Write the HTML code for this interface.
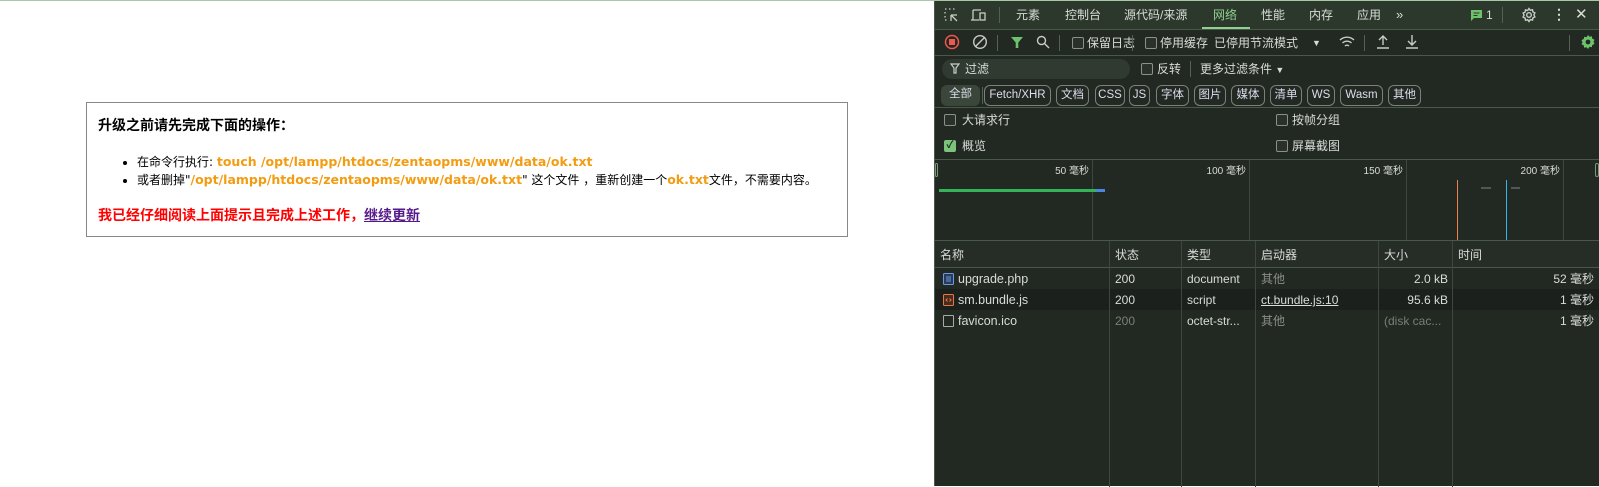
<!DOCTYPE html>
<html><head><meta charset="utf-8"><style>
*{box-sizing:border-box;margin:0;padding:0}
body{width:1599px;height:486px;overflow:hidden;background:#fff;font-family:"Liberation Sans","Noto Sans CJK SC",sans-serif;position:relative}
.a{position:absolute}
#topline{left:0;top:0;width:1599px;height:1px;background:#a8c8a8}
#box{left:86px;top:102px;width:762px;height:135px;border:1px solid #888;font-size:12px;color:#000;font-family:"DejaVu Sans","Noto Sans CJK SC",sans-serif}
#box .h{position:absolute;left:11px;top:12px;font-weight:bold;font-size:14px}
#box ul{position:absolute;left:50px;top:50px;line-height:18px}
#box li{list-style:disc}
.o{color:#f39c12;font-weight:bold;font-size:12.5px}
#box .r{position:absolute;left:11px;top:102px;color:#f00;font-weight:bold;font-size:14px}
#box .r a{color:#551a8b;text-decoration:underline}
#dt{left:934px;top:1px;width:665px;height:485px;background:#222822;color:#d8dcd8;font-size:12px;line-height:15px;border-left:1px solid #4a5a4a}
.t{position:absolute;white-space:nowrap;line-height:15px}
.hl{position:absolute;height:1px;background:#3c483c}
.vl{position:absolute;width:1px;background:#3c483c}
.cb{position:absolute;width:12px;height:12px;border:1px solid #8a908a;border-radius:2px;background:#2a302a}
.chip{position:absolute;top:84px;height:21px;border:1px solid #7a807a;border-radius:6px;font-size:11.5px;line-height:19px;text-align:center;color:#dde}
</style></head><body>
<div class="a" id="topline"></div>
<div class="a" id="box">
<div class="h">升级之前请先完成下面的操作：</div>
<ul>
<li>在命令行执行: <span class="o">touch /opt/lampp/htdocs/zentaopms/www/data/ok.txt</span></li>
<li>或者删掉"<span class="o">/opt/lampp/htdocs/zentaopms/www/data/ok.txt</span>" 这个文件 ，重新创建一个<span class="o">ok.txt</span>文件，不需要内容。</li>
</ul>
<div class="r">我已经仔细阅读上面提示且完成上述工作，<a>继续更新</a></div>
</div>

<div class="a" id="dt">
<div class="a" style="left:0;top:0;width:665px;height:28px;background:#2c382c"></div>
<div class="hl" style="left:0;top:28px;width:665px;background:#4a584a"></div>
<svg class="a" style="left:8px;top:6px" width="16" height="16" viewBox="0 0 16 16" fill="none" stroke="#c8ccc8" stroke-width="1.3"><path d="M2 2h2M6 2h2M2 5v2M2 9v2M2 13h2M10 2h2" stroke-dasharray="1.5 1.5"/><path d="M8 8v6M8 8h6M8 8l6 6"/></svg>
<svg class="a" style="left:34px;top:6px" width="18" height="16" viewBox="0 0 18 16" fill="none" stroke="#c8ccc8" stroke-width="1.3"><path d="M4 3h8M4 3v10M2 13h8"/><rect x="11" y="6" width="5" height="7"/></svg>
<div class="vl" style="left:64px;top:6px;height:16px;background:#556055"></div>
<div class="t" style="left:81px;top:7px">元素</div>
<div class="t" style="left:130px;top:7px">控制台</div>
<div class="t" style="left:189px;top:7px">源代码/来源</div>
<div class="t" style="left:278px;top:7px;color:#8fd08f">网络</div>
<div class="a" style="left:267px;top:26px;width:48px;height:2px;background:#8fd08f"></div>
<div class="t" style="left:326px;top:7px">性能</div>
<div class="t" style="left:374px;top:7px">内存</div>
<div class="t" style="left:422px;top:7px">应用</div>
<div class="t" style="left:461px;top:6px;font-size:13px">»</div>
<svg class="a" style="left:536px;top:9px" width="11" height="11" viewBox="0 0 11 11"><path d="M0 0h11v8H3L0 11z" fill="#6cc36c"/><path d="M2.5 3h6M2.5 5.5h4" stroke="#2c382c"/></svg>
<div class="t" style="left:551px;top:7px">1</div>
<div class="vl" style="left:567px;top:6px;height:16px;background:#556055"></div>
<svg class="a" style="left:586px;top:6px" width="16" height="16" viewBox="0 0 16 16" fill="none" stroke="#c8ccc8" stroke-width="1.4"><circle cx="8" cy="8" r="2.3"/><path d="M8 1.5l1.3 1.8 2.2-.6.4 2.2 2 1-1 2 1 2-2 1-.4 2.2-2.2-.6L8 14.5l-1.3-1.8-2.2.6-.4-2.2-2-1 1-2-1-2 2-1 .4-2.2 2.2.6z"/></svg>
<div class="t" style="left:617px;top:6px;font-weight:bold;font-size:14px">⋮</div>
<div class="t" style="left:640px;top:6px;font-size:15px">✕</div>
<div class="hl" style="left:0;top:54px;width:665px;background:#4a584a"></div>
<svg class="a" style="left:9px;top:33px" width="16" height="16"><circle cx="8" cy="8" r="6.5" fill="none" stroke="#f0584f" stroke-width="1.5"/><rect x="5" y="5" width="6" height="6" fill="#f0584f"/></svg>
<svg class="a" style="left:37px;top:33px" width="16" height="16" fill="none" stroke="#c8ccc8" stroke-width="1.4"><circle cx="8" cy="8" r="6.3"/><path d="M3.5 12.5l9-9"/></svg>
<div class="vl" style="left:62px;top:34px;height:16px;background:#556055"></div>
<svg class="a" style="left:75px;top:34px" width="14" height="14"><path d="M1 2h12L8.3 7.5V13H5.7V7.5z" fill="#6cc36c"/></svg>
<svg class="a" style="left:101px;top:34px" width="14" height="14" fill="none" stroke="#c8ccc8" stroke-width="1.4"><circle cx="5.5" cy="5.5" r="4"/><path d="M8.5 8.5L13 13"/></svg>
<div class="vl" style="left:124px;top:34px;height:16px;background:#556055"></div>
<div class="cb" style="left:137px;top:36px"></div>
<div class="t" style="left:152px;top:35px">保留日志</div>
<div class="vl" style="left:197px;top:34px;height:16px;background:#556055"></div>
<div class="cb" style="left:210px;top:36px"></div>
<div class="t" style="left:225px;top:35px">停用缓存</div>
<div class="t" style="left:279px;top:35px">已停用节流模式</div>
<div class="t" style="left:377px;top:35px;font-size:9px">▼</div>
<svg class="a" style="left:404px;top:34px" width="16" height="14" fill="none" stroke="#c8ccc8" stroke-width="1.4"><path d="M1 5a10 10 0 0 1 14 0M3.5 8a6.5 6.5 0 0 1 9 0M6 11a2.8 2.8 0 0 1 4 0"/></svg>
<div class="vl" style="left:429px;top:34px;height:16px;background:#556055"></div>
<svg class="a" style="left:441px;top:33px" width="14" height="15" fill="none" stroke="#c8ccc8" stroke-width="1.4"><path d="M7 11V2M3 6l4-4 4 4M1 14h12"/></svg>
<svg class="a" style="left:470px;top:33px" width="14" height="15" fill="none" stroke="#c8ccc8" stroke-width="1.4"><path d="M7 1v10M3 7l4 4 4-4M1 14h12"/></svg>
<div class="vl" style="left:634px;top:34px;height:16px;background:#556055"></div>
<svg class="a" style="left:645px;top:33px" width="16" height="16" viewBox="0 0 16 16"><path d="M8 1l1.5 1.8 2.3-.5.5 2.3 2.2 1.1-1 2.1 1 2.1-2.2 1.1-.5 2.3-2.3-.5L8 15l-1.5-1.8-2.3.5-.5-2.3-2.2-1.1 1-2.1-1-2.1 2.2-1.1.5-2.3 2.3.5z" fill="#6cc36c"/><circle cx="8" cy="8" r="2.4" fill="#222822"/></svg>
<div class="a" style="left:7px;top:58px;width:188px;height:20px;border-radius:10px;background:#303a30"></div>
<svg class="a" style="left:15px;top:62px" width="10" height="11" fill="none" stroke="#c8ccc8" stroke-width="1.2"><path d="M1 1h8L6 5v5H4V5z"/></svg>
<div class="t" style="left:30px;top:61px">过滤</div>
<div class="cb" style="left:206px;top:62px"></div>
<div class="t" style="left:222px;top:61px">反转</div>
<div class="vl" style="left:255px;top:60px;height:16px;background:#556055"></div>
<div class="t" style="left:265px;top:61px">更多过滤条件 <span style="font-size:9px">▼</span></div>
<div class="chip" style="left:6px;width:39px;border:none;background:#3a463a">全部</div>
<div class="vl" style="left:47px;top:86px;height:17px;background:#556055"></div>
<div class="chip" style="left:49px;width:67px">Fetch/XHR</div>
<div class="chip" style="left:121px;width:33px">文档</div>
<div class="chip" style="left:160px;width:30px">CSS</div>
<div class="chip" style="left:194px;width:21px">JS</div>
<div class="chip" style="left:221px;width:33px">字体</div>
<div class="chip" style="left:259px;width:32px">图片</div>
<div class="chip" style="left:296px;width:34px">媒体</div>
<div class="chip" style="left:335px;width:32px">清单</div>
<div class="chip" style="left:372px;width:28px">WS</div>
<div class="chip" style="left:405px;width:43px">Wasm</div>
<div class="chip" style="left:453px;width:33px">其他</div>
<div class="hl" style="left:0;top:106px;width:665px;background:#4a584a"></div>
<div class="cb" style="left:9px;top:113px"></div>
<div class="t" style="left:27px;top:112px">大请求行</div>
<div class="cb" style="left:341px;top:113px"></div>
<div class="t" style="left:357px;top:112px">按帧分组</div>
<div class="a" style="left:9px;top:139px;width:12px;height:12px;border-radius:2px;background:#7cc47c;color:#1a2a1a;font-size:10px;line-height:12px;text-align:center;font-weight:bold">✓</div>
<div class="t" style="left:27px;top:138px">概览</div>
<div class="cb" style="left:341px;top:139px"></div>
<div class="t" style="left:357px;top:138px">屏幕截图</div>
<div class="hl" style="left:0;top:158px;width:665px;background:#4a584a"></div>
<div class="vl" style="left:157px;top:159px;height:80px"></div>
<div class="vl" style="left:314px;top:159px;height:80px"></div>
<div class="vl" style="left:471px;top:159px;height:80px"></div>
<div class="vl" style="left:628px;top:159px;height:80px"></div>
<div class="t" style="left:80px;top:163px;width:74px;text-align:right;font-size:10px">50 毫秒</div>
<div class="t" style="left:237px;top:163px;width:74px;text-align:right;font-size:10px">100 毫秒</div>
<div class="t" style="left:394px;top:163px;width:74px;text-align:right;font-size:10px">150 毫秒</div>
<div class="t" style="left:551px;top:163px;width:74px;text-align:right;font-size:10px">200 毫秒</div>
<div class="a" style="left:0;top:162px;width:3px;height:14px;border:1px solid #7a9a7a;border-radius:2px"></div>
<div class="a" style="left:660px;top:162px;width:4px;height:14px;border:1px solid #7a9a7a;border-radius:2px"></div>
<div class="a" style="left:4px;top:188px;width:157px;height:3px;background:#35b35a"></div>
<div class="a" style="left:161px;top:188px;width:9px;height:3px;background:#4a86e0"></div>
<div class="a" style="left:522px;top:179px;width:1px;height:60px;background:#f08050"></div>
<div class="a" style="left:571px;top:179px;width:1px;height:60px;background:#30b8e8"></div>
<div class="a" style="left:546px;top:186px;width:10px;height:2px;background:#555"></div>
<div class="a" style="left:576px;top:186px;width:9px;height:2px;background:#555"></div>
<div class="hl" style="left:0;top:239px;width:665px;background:#4a584a"></div>
<div class="a" style="left:0;top:240px;width:665px;height:27px;background:#262c26"></div>
<div class="hl" style="left:0;top:266px;width:665px;background:#4a584a"></div>
<div class="a" style="left:0;top:288px;width:665px;height:21px;background:#1c201c"></div>
<div class="vl" style="left:174px;top:240px;height:246px"></div>
<div class="vl" style="left:246px;top:240px;height:246px"></div>
<div class="vl" style="left:320px;top:240px;height:246px"></div>
<div class="vl" style="left:443px;top:240px;height:246px"></div>
<div class="vl" style="left:517px;top:240px;height:246px"></div>
<div class="t" style="left:5px;top:247px">名称</div>
<div class="t" style="left:180px;top:247px">状态</div>
<div class="t" style="left:252px;top:247px">类型</div>
<div class="t" style="left:326px;top:247px">启动器</div>
<div class="t" style="left:449px;top:247px">大小</div>
<div class="t" style="left:523px;top:247px">时间</div>
<svg class="a" style="left:8px;top:272px" width="11" height="12"><rect x=".5" y=".5" width="10" height="11" rx="1" fill="#2a3a5a" stroke="#6a9ae0"/><path d="M3 4h5M3 6h5M3 8h5" stroke="#6a9ae0"/></svg>
<div class="t" style="left:23px;top:271px;font-size:12.5px">upgrade.php</div>
<div class="t" style="left:180px;top:271px">200</div>
<div class="t" style="left:252px;top:271px">document</div>
<div class="t" style="left:326px;top:271px;color:#8a8e8a">其他</div>
<div class="t" style="left:449px;top:271px;width:64px;text-align:right">2.0 kB</div>
<div class="t" style="left:523px;top:271px;width:136px;text-align:right">52 毫秒</div>
<svg class="a" style="left:8px;top:293px" width="11" height="12"><rect x=".5" y=".5" width="10" height="11" rx="1" fill="#4a2a1a" stroke="#e07a4a"/><path d="M4.5 4.5L3 6l1.5 1.5M6.5 4.5L8 6 6.5 7.5" stroke="#e07a4a" fill="none"/></svg>
<div class="t" style="left:23px;top:292px;font-size:12.5px">sm.bundle.js</div>
<div class="t" style="left:180px;top:292px">200</div>
<div class="t" style="left:252px;top:292px">script</div>
<div class="t" style="left:326px;top:292px;text-decoration:underline">ct.bundle.js:10</div>
<div class="t" style="left:449px;top:292px;width:64px;text-align:right">95.6 kB</div>
<div class="t" style="left:523px;top:292px;width:136px;text-align:right">1 毫秒</div>
<div class="a" style="left:8px;top:314px;width:11px;height:12px;border:1px solid #aaa;border-radius:1px"></div>
<div class="t" style="left:23px;top:313px;font-size:12.5px">favicon.ico</div>
<div class="t" style="left:180px;top:313px;color:#7a7e7a">200</div>
<div class="t" style="left:252px;top:313px">octet-str...</div>
<div class="t" style="left:326px;top:313px;color:#8a8e8a">其他</div>
<div class="t" style="left:449px;top:313px;color:#7a7e7a">(disk cac...</div>
<div class="t" style="left:523px;top:313px;width:136px;text-align:right">1 毫秒</div>
</div>
</body></html>
